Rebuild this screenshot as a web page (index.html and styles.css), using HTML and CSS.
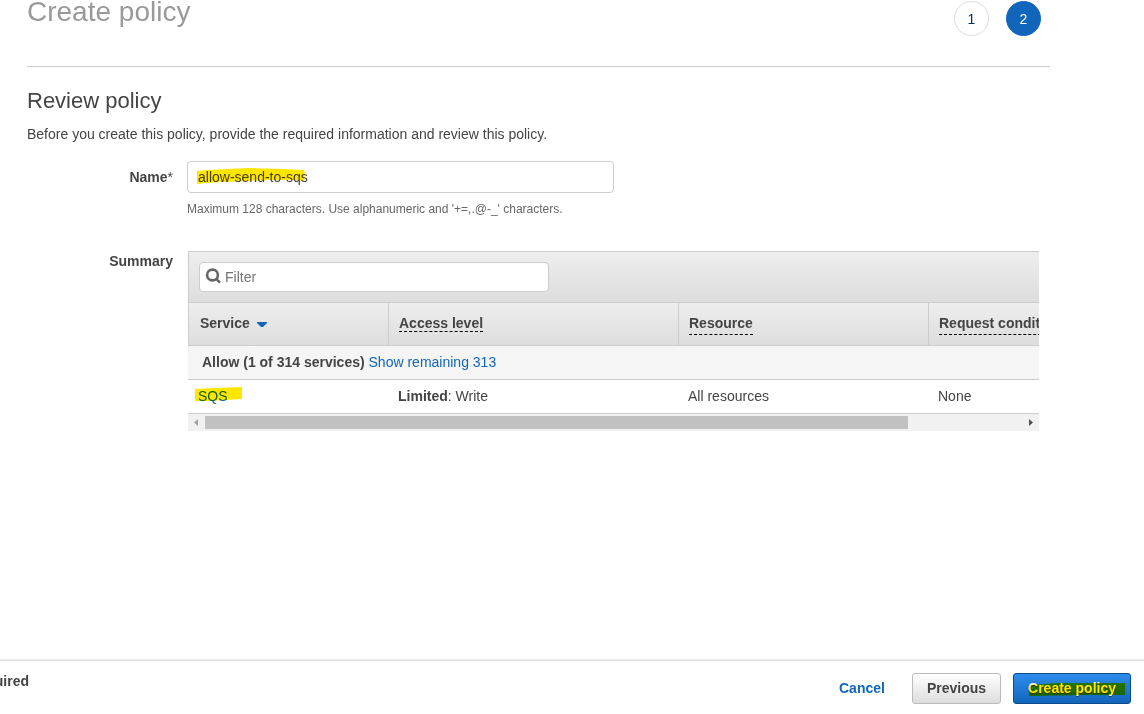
FILE: index.html
```
<!DOCTYPE html>
<html lang="en">
<head>
  <meta charset="UTF-8" />
  <meta name="viewport" content="width=device-width, initial-scale=1" />
  <title>Create policy</title>
  <link rel="stylesheet" href="styles.css">
</head>
<body>
  <main class="wizard">
    <header class="wizard-header">
      <h1>Create policy</h1>
      <div class="steps">
        <button type="button" class="step">1</button>
        <button type="button" class="step active">2</button>
      </div>
    </header>

    <h2>Review policy</h2>
    <p class="intro">Before you create this policy, provide the required information and review this policy.</p>

    <div class="form-row name-row">
      <label class="form-label" for="policyName">Name<span class="star">*</span></label>
      <div class="field">
        <input type="text" id="policyName" class="text-input" value="allow-send-to-sqs">
        <svg class="marker marker-name" viewBox="0 0 109 17" aria-hidden="true"><path d="M0 3 L12 2 L30 1 L52 0 L86 1 L107 2 L108 6 L107 13 L98 12 L70 12 L50 13 L24 14 L10 15 L0 16 Z"/></svg>
        <p class="hint">Maximum 128 characters. Use alphanumeric and '+=,.@-_' characters.</p>
      </div>
    </div>

    <div class="form-row">
      <div class="form-label">Summary</div>
      <div class="summary">
        <div class="toolbar">
          <div class="filter">
            <svg class="search-icon" viewBox="0 0 16 16" aria-hidden="true"><circle cx="7.5" cy="7" r="5.4"/><path d="M11.2 10.8 L15 14.6"/></svg>
            <input type="text" class="filter-input" placeholder="Filter" aria-label="Filter">
          </div>
        </div>
        <div class="table-scroll">
          <table>
            <colgroup>
              <col class="col-service">
              <col class="col-access">
              <col class="col-wide">
              <col class="col-wide">
            </colgroup>
            <thead>
              <tr>
                <th>Service <svg class="sort-icon" viewBox="0 0 10 6" aria-hidden="true"><path d="M0 0 H10 V1 L6 5 H4 L0 1 Z"/></svg></th>
                <th><span class="tip">Access level</span></th>
                <th><span class="tip tip-block">Resource</span></th>
                <th><span class="tip tip-block">Request condition</span></th>
              </tr>
            </thead>
            <tbody>
              <tr class="group">
                <td colspan="4"><b>Allow (1 of 314 services)</b> <a href="#">Show remaining 313</a></td>
              </tr>
              <tr>
                <td><span class="marked"><a href="#">SQS</a><svg class="marker marker-sqs" viewBox="0 0 47 15" aria-hidden="true"><path d="M0 2 L20 1 L47 0 V12 L30 13 L14 14 H0 Z"/></svg></span></td>
                <td><b>Limited</b>: Write</td>
                <td>All resources</td>
                <td>None</td>
              </tr>
            </tbody>
          </table>
        </div>
        <div class="scrollbar">
          <svg class="arrow off" viewBox="0 0 17 17" aria-hidden="true"><path d="M10 5 V12 L6 8.5 Z"/></svg>
          <div class="track"><div class="thumb"></div></div>
          <svg class="arrow" viewBox="0 0 17 17" aria-hidden="true"><path d="M7 5 V12 L11 8.5 Z"/></svg>
        </div>
      </div>
    </div>
  </main>

  <footer class="footer">
    <div class="required">* Required</div>
    <div class="actions">
      <a href="#" class="cancel">Cancel</a>
      <button type="button" class="btn">Previous</button>
      <button type="button" class="btn primary">Create policy<svg class="marker marker-create" viewBox="0 0 97 13" aria-hidden="true"><path d="M1 2 L30 0 H97 V12 H60 L1 13 Z"/></svg></button>
    </div>
  </footer>
</body>
</html>
```

FILE: styles.css
```
* {
  box-sizing: border-box;
}
body {
  display: flex;
  flex-direction: column;
  min-height: 100vh;
  margin: 0;
  overflow-x: hidden;
  background: #fff;
  color: #444;
  font: 14px/20px "Liberation Sans", Arial, sans-serif;
}
h1, h2, p {
  margin: 0;
  font-weight: normal;
}
a {
  color: #1166bb;
  text-decoration: none;
}
input, button {
  font: inherit;
  color: inherit;
}

.wizard {
  flex: 1;
  margin: 0 94px 0 27px;
}
.wizard-header {
  display: flex;
  justify-content: space-between;
  height: 67px;
  padding-right: 9px;
  border-bottom: 1px solid #ccc;
}
h1 {
  color: #999;
  font-size: 28px;
  line-height: 24px;
}
.steps {
  display: flex;
  gap: 17px;
  padding-top: 1px;
}
.step {
  width: 35px;
  height: 35px;
  padding: 0;
  border: 1px solid #ddd;
  border-radius: 50%;
  background: #fff;
  color: #003366;
}
.step.active {
  border-color: #1166bb;
  background: #1166bb;
  color: #fff;
}
h2 {
  margin-top: 20px;
  font-size: 22px;
  line-height: 28px;
}
.intro {
  margin-top: 9px;
}

/* form */
.form-row {
  display: flex;
  gap: 15px;
}
.name-row {
  gap: 14px;
  margin: 17px 0 32px;
}
.form-label {
  flex: none;
  width: 146px;
  font-weight: bold;
  text-align: right;
}
.name-row .form-label {
  padding-top: 6px;
}
.star {
  font-weight: normal;
}
.field {
  position: relative;
}
.text-input {
  display: block;
  width: 427px;
  height: 32px;
  padding: 0 10px;
  border: 1px solid #ccc;
  border-radius: 4px;
}
.hint {
  margin-top: 6px;
  color: #666;
  font-size: 12px;
}

/* highlighter strokes */
.marker {
  position: absolute;
  fill: #ffe600;
  mix-blend-mode: multiply;
  pointer-events: none;
}
.marker-name {
  left: 10px;
  top: 7px;
  width: 109px;
}
.marked {
  position: relative;
}
.marker-sqs {
  left: -3px;
  top: -1px;
  width: 47px;
}
.marker-create {
  left: 14px;
  top: 9px;
  width: 97px;
}

/* summary table */
.summary {
  flex: 1;
  min-width: 0;
  margin-right: 11px;
}
.toolbar {
  padding: 10px;
  border: 1px solid #ccc;
  border-right: 0;
  background: linear-gradient(#eee, #ddd);
}
.filter {
  display: flex;
  align-items: center;
  gap: 4px;
  width: 350px;
  height: 30px;
  padding: 0 5px;
  border: 1px solid #ccc;
  border-radius: 4px;
  background: #fff;
}
.search-icon {
  flex: none;
  width: 16px;
  padding-bottom: 2px;
  fill: none;
  stroke: #666;
  stroke-width: 2.6;
}
.filter-input {
  flex: 1;
  min-width: 0;
  padding: 0;
  border: 0;
  outline: 0;
}
.filter-input::placeholder {
  color: #757575;
}
.table-scroll {
  overflow: hidden;
}
table {
  width: 990px;
  table-layout: fixed;
  border-collapse: separate;
  border-spacing: 0;
}
.col-service {
  width: 200px;
}
.col-access {
  width: 290px;
}
.col-wide {
  width: 250px;
}
th {
  height: 43px;
  padding: 0 10px 2px;
  border-left: 1px solid #ccc;
  border-bottom: 1px solid #ccc;
  background: linear-gradient(#eee, #ddd);
  text-align: left;
}
th:first-child {
  padding-left: 11px;
}
.sort-icon {
  width: 10px;
  margin-left: 3px;
  fill: #1166bb;
}
.tip {
  border-bottom: 1px dashed #000;
}
.tip-block {
  display: inline-block;
  line-height: 22px;
}
td {
  height: 34px;
  padding: 0 10px 2px;
  border-bottom: 1px solid #ccc;
}
.group td {
  padding-left: 14px;
  background: #f5f5f5;
}
.scrollbar {
  display: flex;
  height: 17px;
  background: #f1f1f1;
}
.arrow {
  flex: none;
  width: 17px;
  fill: #505050;
}
.arrow.off {
  fill: #a3a3a3;
}
.track {
  flex: 1;
  padding: 2px 0;
}
.thumb {
  width: 86%;
  height: 13px;
  background: #c1c1c1;
}

/* footer */
.footer {
  display: flex;
  justify-content: space-between;
  height: 54px;
  padding: 12px 13px 0 0;
  border-top: 1px solid #ddd;
  box-shadow: 0 -1px 2px #eee;
}
.required {
  margin-left: -41px;
  font-weight: bold;
  line-height: 16px;
}
.actions {
  display: flex;
  align-items: flex-start;
  gap: 12px;
}
.cancel {
  padding: 5px 15px;
  font-weight: bold;
}
.btn {
  position: relative;
  height: 31px;
  padding: 0 14px 2px;
  border: 1px solid #bbb;
  border-radius: 3px;
  background: linear-gradient(#fff, #ddd);
  font-weight: bold;
}
.btn.primary {
  border-color: #0b4a8b;
  background: linear-gradient(#2f8cec, #1166bb);
  color: #fff;
  text-shadow: 0 1px 1px #333;
}
```
